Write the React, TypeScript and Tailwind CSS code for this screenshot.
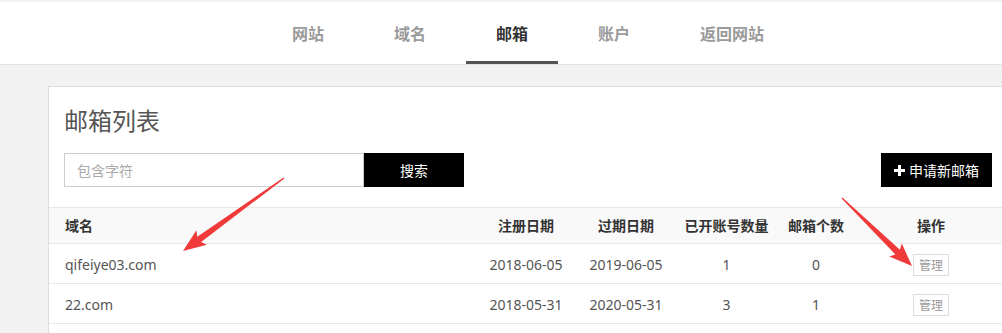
import React from "react";

type Pt = [number, number];

function arrowPoints(t: Pt, p: Pt, headLen: number, headW: number, shaftW: number): string {
  const dx = p[0] - t[0];
  const dy = p[1] - t[1];
  const len = Math.hypot(dx, dy);
  const ux = dx / len;
  const uy = dy / len;
  const nx = -uy;
  const ny = ux;
  const bx = p[0] - ux * headLen;
  const by = p[1] - uy * headLen;
  const wx = bx - ux * 3;
  const wy = by - uy * 3;
  const pts: Pt[] = [
    [t[0] + nx * 0.6, t[1] + ny * 0.6],
    [bx + nx * shaftW, by + ny * shaftW],
    [wx + nx * headW, wy + ny * headW],
    [p[0], p[1]],
    [wx - nx * headW, wy - ny * headW],
    [bx - nx * shaftW, by - ny * shaftW],
    [t[0] - nx * 0.6, t[1] - ny * 0.6],
  ];
  return pts.map((q) => `${q[0].toFixed(1)},${q[1].toFixed(1)}`).join(" ");
}

const navItems = ["网站", "域名", "邮箱", "账户", "返回网站"];

const rows = [
  { domain: "qifeiye03.com", reg: "2018-06-05", exp: "2019-06-05", opened: "1", count: "0" },
  { domain: "22.com", reg: "2018-05-31", exp: "2020-05-31", opened: "3", count: "1" },
];

const grid = "grid grid-cols-[427px_100px_100px_101px_78px_152px]";

export default function App() {
  return (
    <div
      className="relative w-[1002px] h-[333px] overflow-hidden bg-[#f2f2f2] pt-[2px]"
      style={{ fontFamily: '"Noto Sans", "Noto Sans CJK SC", sans-serif' }}
    >
      <nav className="h-[63px] bg-white border-b border-[#e4e4e4] flex pl-[262px] gap-[10px]">
        {navItems.map((item) => {
          const active = item === "邮箱";
          return (
            <div
              key={item}
              className={
                active
                  ? "h-[62px] px-[30px] pt-[3px] flex items-center border-b-[3px] border-[#555555] text-[16px] font-bold text-[#333333]"
                  : "h-[62px] px-[30px] pt-[3px] flex items-center border-b-[3px] border-transparent text-[16px] font-bold text-[#9a9a9a]"
              }
              style={{ fontFamily: '"Noto Sans CJK SC", sans-serif' }}
            >
              {item}
            </div>
          );
        })}
      </nav>

      <div className="pt-[21px] pl-[48px]">
        <div className="w-[960px] bg-white border border-[#dddddd] pb-[40px]">
          <div className="px-[15px] pt-[15px]">
            <div
              className="h-[36px] leading-[36px] text-[24px] text-[#555555]"
              style={{ fontFamily: '"Noto Sans CJK SC", sans-serif' }}
            >
              邮箱列表
            </div>
            <div className="mt-[15px] h-[34px] flex justify-between">
              <div className="flex">
                <div className="w-[300px] h-[34px] border border-[#cccccc] flex items-center pl-[12px] text-[14px] text-[#a9a9a9]"
                  style={{ fontFamily: '"Noto Sans CJK SC", sans-serif' }}>
                  包含字符
                </div>
                <div className="w-[100px] h-[34px] bg-black text-white text-[14px] flex items-center justify-center"
                  style={{ fontFamily: '"Noto Sans CJK SC", sans-serif' }}>
                  搜索
                </div>
              </div>
              <div className="w-[111px] h-[34px] bg-black text-white text-[14px] flex items-center pl-[13px] gap-[4px]"
                style={{ fontFamily: '"Noto Sans CJK SC", sans-serif' }}>
                <svg width="11" height="11" viewBox="0 0 11 11">
                  <rect x="4" y="0" width="3" height="11" fill="white" />
                  <rect x="0" y="4" width="11" height="3" fill="white" />
                </svg>
                <span>申请新邮箱</span>
              </div>
            </div>
          </div>

          <div className="mt-[20px]">
            <div
              className={`${grid} h-[37px] bg-[#f9f9f9] border-t border-b border-[#e8e8e8] text-[14px] font-bold text-[#333333] items-center`}
              style={{ fontFamily: '"Noto Sans CJK SC", sans-serif' }}
            >
              <div className="pl-[16px]">域名</div>
              <div className="text-center">注册日期</div>
              <div className="text-center">过期日期</div>
              <div className="text-center">已开账号数量</div>
              <div className="text-center">邮箱个数</div>
              <div className="text-center">操作</div>
            </div>
            {rows.map((r) => (
              <div
                key={r.domain}
                className={`${grid} h-[40px] pt-[2px] border-b border-[#e8e8e8] text-[14px] text-[#555555] items-center`}
              >
                <div className="pl-[16px]">{r.domain}</div>
                <div className="text-center">{r.reg}</div>
                <div className="text-center">{r.exp}</div>
                <div className="text-center">{r.opened}</div>
                <div className="text-center">{r.count}</div>
                <div className="flex justify-center">
                  <div
                    className="w-[36px] h-[22px] border border-[#dddddd] text-[12px] text-[#999999] flex items-center justify-center"
                    style={{ fontFamily: '"Noto Sans CJK SC", sans-serif' }}
                  >
                    管理
                  </div>
                </div>
              </div>
            ))}
          </div>
        </div>
      </div>

      <svg className="absolute left-0 top-0 pointer-events-none" width="1002" height="333">
        <polygon points={arrowPoints([284, 178], [183, 251], 20, 9, 3.2)} fill="#f03a3a" />
        <polygon points={arrowPoints([842, 198], [912, 266], 20, 9, 3.2)} fill="#f03a3a" />
      </svg>
    </div>
  );
}
